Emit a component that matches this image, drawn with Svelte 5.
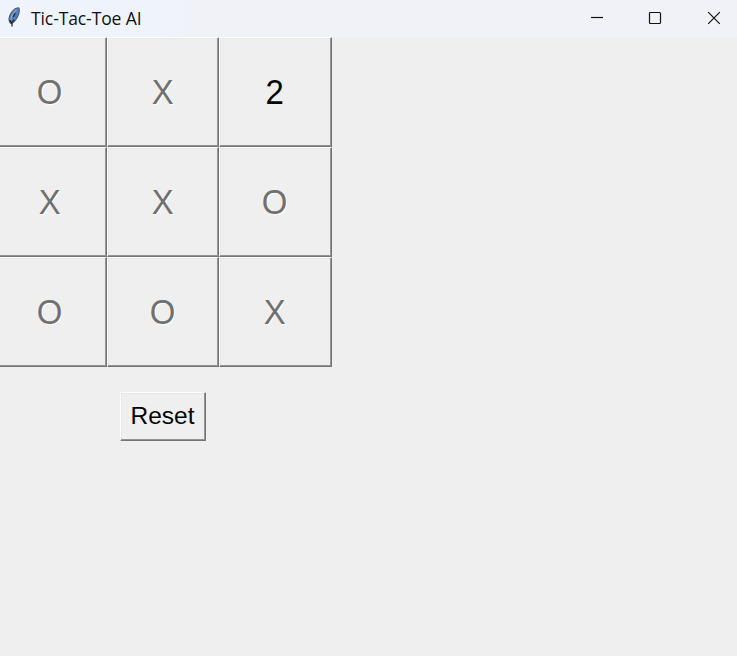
<script>
  const cells = ['O', 'X', '2', 'X', 'X', 'O', 'O', 'O', 'X'];
</script>

<div class="window">
  <header>
    <svg class="feather" width="16" height="24" viewBox="0 0 16 24">
      <path d="M4.8 18.5C1.8 15.5 3 10.8 6.5 6.2C8.5 3.6 11 2.5 12.9 3C14 6.5 12 11.5 9.6 15C8.3 17 6.5 18.4 4.8 18.5Z" fill="#4b82c4" stroke="#55585e" stroke-width="1.1" />
      <path d="M10.5 4.5C8 6.5 5.6 10.5 4.7 15" fill="none" stroke="#8da9c8" stroke-width="1.2" />
      <path d="M9.2 8L7.2 12M8 14.5L6 17.5V21.5M3.8 15L5.5 18" fill="none" stroke="#222930" stroke-width="1.3" />
    </svg>
    <span class="title">Tic-Tac-Toe AI</span>
    <div class="controls">
      <svg width="14" height="14" viewBox="0 0 14 14"><path d="M1 6.5H13" /></svg>
      <svg width="14" height="14" viewBox="0 0 14 14"><rect x="1.5" y="1.5" width="11" height="11" rx="1" /></svg>
      <svg width="14" height="14" viewBox="0 0 14 14"><path d="M1.2 1.2L12.8 12.8M12.8 1.2L1.2 12.8" /></svg>
    </div>
  </header>
  <main>
    <div class="board">
      {#each cells as value, i}
        <button class="cell" class:edge={i % 3 === 0} class:open={value === '2'}><span>{value}</span></button>
      {/each}
    </div>
    <button class="reset">Reset</button>
  </main>
</div>

<style>
  :global(body) {
    margin: 0;
    background: #efefef;
  }
  .window {
    width: 737px;
    height: 656px;
    overflow: hidden;
    background: #efefef;
    font-family: "Liberation Sans", Arial, sans-serif;
  }
  header {
    display: flex;
    align-items: center;
    box-sizing: border-box;
    height: 37px;
    padding: 0 16px 2px 6px;
    background: linear-gradient(90deg, #eff3fb 0, #eff3fb 160px, #f0f2f8 200px);
  }
  .feather {
    margin: 0 9px 2px 0;
  }
  .title {
    font: 17.5px/24px "Open Sans", "Noto Sans", sans-serif;
    letter-spacing: -0.1px;
    white-space: nowrap;
    color: #111;
  }
  .controls {
    display: flex;
    gap: 45px;
    margin-left: auto;
  }
  .controls svg {
    fill: none;
    stroke: #111;
    stroke-width: 1.2;
  }
  .controls svg:first-child {
    margin-right: -1px;
  }
  main {
    display: flex;
    flex-direction: column;
    align-items: flex-start;
  }
  .board {
    display: grid;
    grid-template-columns: 107px 112px 113px;
    grid-template-rows: repeat(3, 110px);
  }
  button {
    box-sizing: border-box;
    margin: 0;
    border: 1px solid;
    border-color: #fff #757575 #757575 #fff;
    border-radius: 0;
    background: #efefef;
    box-shadow: inset -1px -1px #949494, inset 1px 1px #e7e7e7;
    font-family: inherit;
  }
  .cell {
    display: flex;
    align-items: center;
    justify-content: center;
    padding: 0 1px 0 0;
    font-size: 35px;
    line-height: 40px;
    color: #707070;
    text-shadow: 1px 1px #fff;
  }
  .cell span {
    transform: scaleX(0.94);
  }
  .cell.edge {
    border-left: 0;
    padding-right: 7px;
    box-shadow: inset -1px -1px #949494, inset 0 1px #e7e7e7;
  }
  .cell.open {
    color: #000;
    text-shadow: none;
  }
  .reset {
    width: 86px;
    height: 49px;
    margin: 25px 0 0 120px;
    padding: 0 1px 1px 0;
    font-size: 24.5px;
    line-height: 30px;
    color: #000;
  }
</style>
